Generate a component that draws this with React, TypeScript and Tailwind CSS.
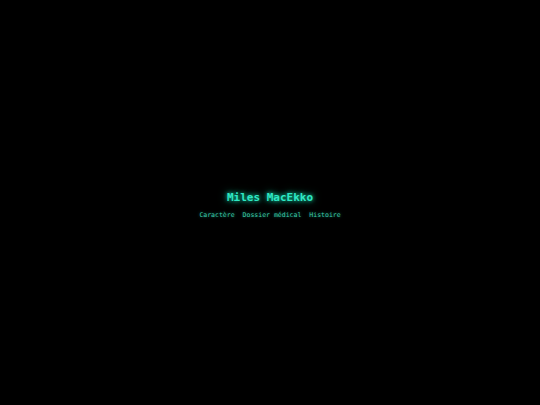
import React from 'react';

const links = ['Caractère', 'Dossier médical', 'Histoire'];

export default function App() {
  return (
    <div className="w-full h-screen bg-black flex flex-col items-center justify-center" style={{ fontFamily: '"DejaVu Sans Mono", monospace' }}>
      <div className="flex flex-col items-center pt-[5px]">
        <h1 className="text-[11px] leading-[14px] font-bold text-[#2ee8c4] [text-shadow:0_0_4px_#19c9a0,0_0_8px_#0f8f72]">
          Miles MacEkko
        </h1>
        <nav className="mt-[5px] flex gap-[8px] text-[6.5px] leading-[10px] text-[#3cc9a8] [text-shadow:0_0_3px_#0f7a60]">
          {links.map((l) => (
            <span key={l}>{l}</span>
          ))}
        </nav>
      </div>
    </div>
  );
}
